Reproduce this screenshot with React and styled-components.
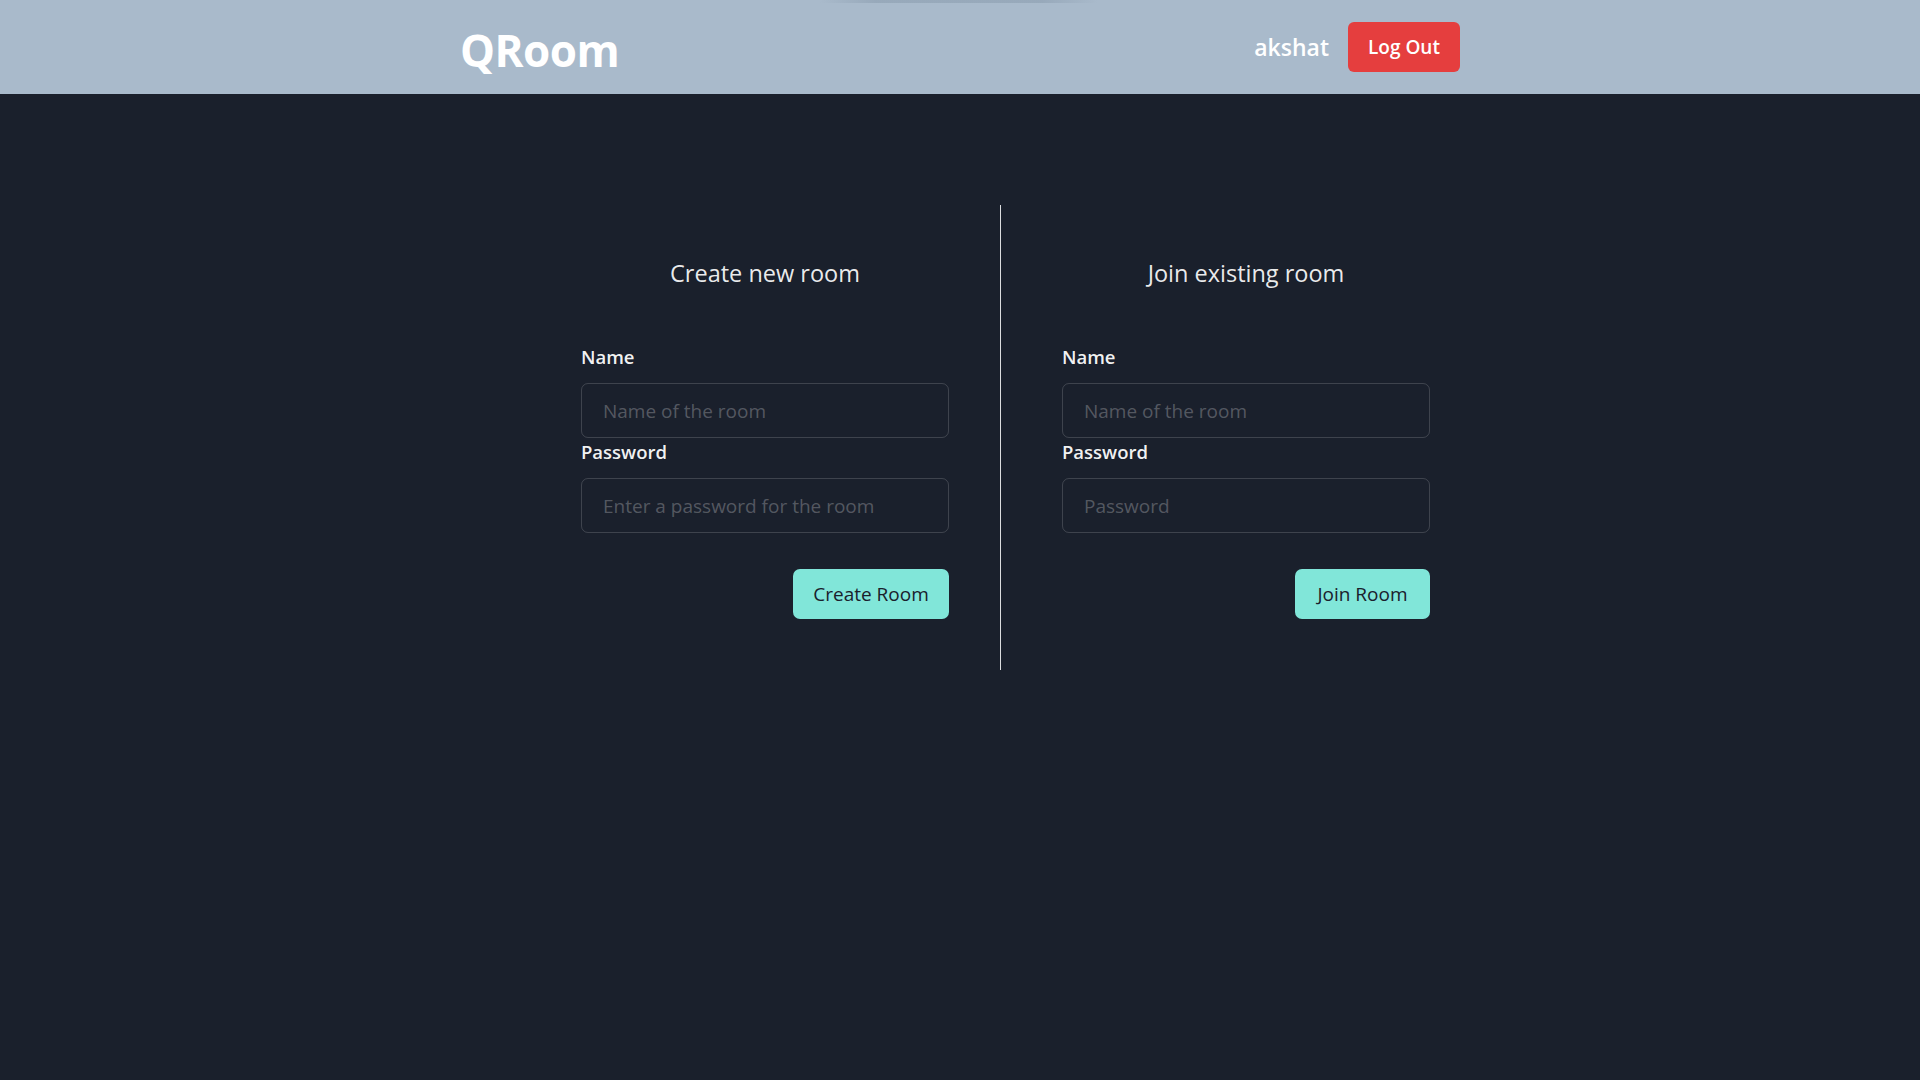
import React from 'react';
import styled, { createGlobalStyle } from 'styled-components';

const GlobalStyle = createGlobalStyle`
  html, body {
    margin: 0;
    padding: 0;
    background: #1a202c;
    font-family: "Open Sans", "Noto Sans", sans-serif;
    color: rgba(255, 255, 255, 0.92);
  }
  * { box-sizing: border-box; }
`;

const Page = styled.div`
  min-height: 1080px;
  background: #1a202c;
`;

const Header = styled.header`
  position: relative;
  height: 94px;
  background: #a9bacb;
`;

const TopShade = styled.div`
  position: absolute;
  top: 0;
  left: 820px;
  width: 278px;
  height: 3px;
  background: linear-gradient(90deg, rgba(140,158,176,0), rgba(140,158,176,0.6) 20%, rgba(140,158,176,0.6) 80%, rgba(140,158,176,0));
`;

const HeaderInner = styled.div`
  width: 1000px;
  height: 100%;
  margin: 0 auto;
  display: flex;
  align-items: center;
  justify-content: space-between;
`;

const Logo = styled.div`
  font-size: 44px;
  font-weight: 700;
  color: #ffffff;
  letter-spacing: -0.5px;
  margin-top: 5px;
`;

const UserBox = styled.div`
  display: flex;
  align-items: center;
  gap: 19px;
`;

const UserName = styled.span`
  font-size: 23px;
  font-weight: 600;
  color: #ffffff;
`;

const LogoutButton = styled.button`
  height: 50px;
  width: 112px;
  border: none;
  border-radius: 6px;
  background: #e53e3e;
  color: #ffffff;
  font-family: inherit;
  font-size: 19px;
  font-weight: 600;
  cursor: pointer;
`;

const Main = styled.main`
  width: 1000px;
  margin: 111px auto 0;
  padding-left: 121px;
  display: flex;
  align-items: stretch;
`;

const Panel = styled.section`
  width: 368px;
  padding: 52px 0 51px;
  display: flex;
  flex-direction: column;
`;

const Divider = styled.div`
  width: 1px;
  background: rgba(255, 255, 255, 0.85);
  margin: 0 61px 0 51px;
`;

const Heading = styled.h2`
  margin: 0 0 56px;
  font-size: 23.5px;
  line-height: 32px;
  font-weight: 400;
  text-align: center;
  color: rgba(255, 255, 255, 0.92);
`;

const Field = styled.div`
  display: flex;
  flex-direction: column;
  margin-top: ${p => (p.first ? '0' : '2px')};
`;

const Label = styled.label`
  font-size: 18.5px;
  line-height: 24px;
  font-weight: 600;
  margin-bottom: 14px;
  color: rgba(255, 255, 255, 0.95);
`;

const Input = styled.input`
  height: 55px;
  width: 100%;
  padding: 0 21px;
  border: 1px solid rgba(255, 255, 255, 0.16);
  border-radius: 7px;
  background: transparent;
  color: #ffffff;
  font-family: inherit;
  font-size: 19px;
  outline: none;
  &::placeholder {
    color: rgba(255, 255, 255, 0.26);
  }
`;

const Actions = styled.div`
  display: flex;
  justify-content: flex-end;
  margin-top: 36px;
`;

const ActionButton = styled.button`
  height: 50px;
  width: ${p => p.w}px;
  border: none;
  border-radius: 7px;
  background: #81e6d9;
  color: #1a202c;
  font-family: inherit;
  font-size: 19px;
  font-weight: 500;
  cursor: pointer;
`;

const RoomForm = ({ title, passHint, action, width }) => (
  <Panel>
    <Heading>{title}</Heading>
    <Field first>
      <Label>Name</Label>
      <Input placeholder="Name of the room" />
    </Field>
    <Field>
      <Label>Password</Label>
      <Input type="password" placeholder={passHint} />
    </Field>
    <Actions>
      <ActionButton w={width}>{action}</ActionButton>
    </Actions>
  </Panel>
);

export default function App() {
  return (
    <Page>
      <GlobalStyle />
      <Header>
        <TopShade />
        <HeaderInner>
          <Logo>QRoom</Logo>
          <UserBox>
            <UserName>akshat</UserName>
            <LogoutButton>Log Out</LogoutButton>
          </UserBox>
        </HeaderInner>
      </Header>
      <Main>
        <RoomForm
          title="Create new room"
          passHint="Enter a password for the room"
          action="Create Room"
          width={156}
        />
        <Divider />
        <RoomForm
          title="Join existing room"
          passHint="Password"
          action="Join Room"
          width={135}
        />
      </Main>
    </Page>
  );
}
